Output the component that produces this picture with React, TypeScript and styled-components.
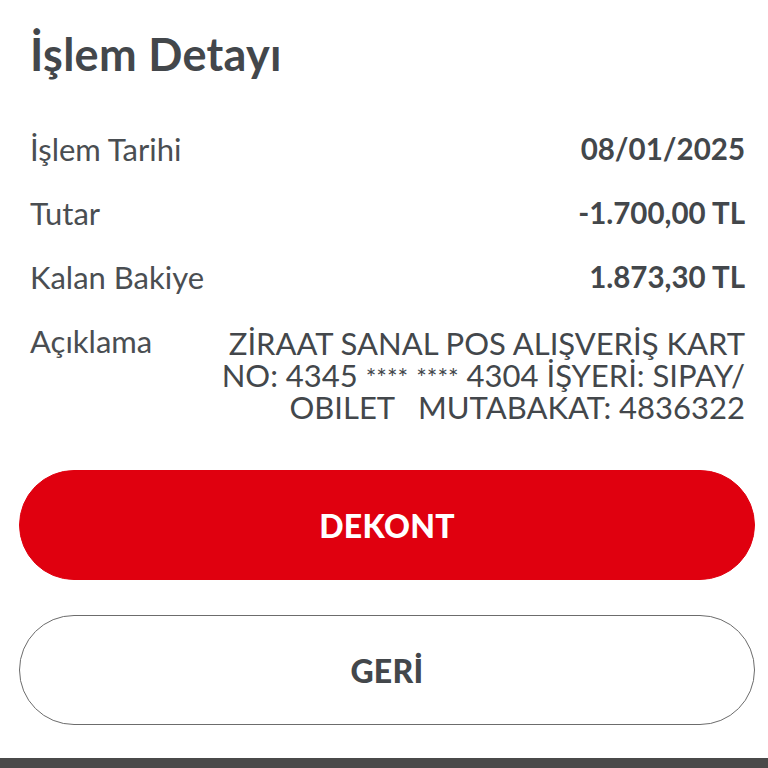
import styled, { createGlobalStyle } from 'styled-components';

const GlobalStyle = createGlobalStyle`
  html, body {
    margin: 0;
    padding: 0;
    background: #ffffff;
  }
  body {
    font-family: Lato, "Noto Sans", sans-serif;
    color: #43474b;
  }
`;

const Page = styled.div`
  width: 768px;
  height: 768px;
  display: flex;
  flex-direction: column;
  overflow: hidden;
`;

const Content = styled.div`
  flex: 1;
  display: flex;
  flex-direction: column;
`;

const Title = styled.h1`
  margin: 27px 0 0 30px;
  font-size: 45px;
  font-weight: 700;
  line-height: 54px;
  color: #43474b;
  letter-spacing: 0.3px;
`;

const Details = styled.dl`
  margin: 50px 23px 0 30px;
  display: flex;
  flex-direction: column;
  gap: 28px;
`;

const Row = styled.div`
  display: flex;
  justify-content: space-between;
  align-items: flex-start;
  gap: 20px;
`;

const Label = styled.dt`
  margin: 0;
  font-size: 31px;
  line-height: 36px;
  color: #4a4e52;
  white-space: nowrap;
`;

const Value = styled.dd<{ $bold?: boolean }>`
  margin: 0;
  padding-top: ${(p) => (p.$bold ? '0' : '4px')};
  text-align: right;
  font-size: ${(p) => (p.$bold ? '29.5px' : '31px')};
  line-height: ${(p) => (p.$bold ? '36px' : '32px')};
  font-weight: ${(p) => (p.$bold ? 700 : 400)};
  color: #43474b;
  white-space: nowrap;
`;

const Stars = styled.span`
  font-size: 25px;
  line-height: 1;
`;

const Actions = styled.div`
  margin: 47px 13px 0 19px;
  display: flex;
  flex-direction: column;
  gap: 35px;
`;

const Button = styled.button<{ $primary?: boolean }>`
  height: 110px;
  border-radius: 55px;
  border: 1px solid ${(p) => (p.$primary ? '#e0000f' : '#6c6c6c')};
  background: ${(p) => (p.$primary ? '#e0000f' : '#ffffff')};
  color: ${(p) => (p.$primary ? '#ffffff' : '#43474b')};
  font-family: Lato, "Noto Sans", sans-serif;
  font-size: 32px;
  font-weight: 900;
  letter-spacing: 0.3px;
  cursor: pointer;
`;

const BottomBar = styled.div`
  height: 10px;
  background: #4a4a4a;
`;

export default function App() {
  return (
    <Page>
      <GlobalStyle />
      <Content>
        <Title>İşlem Detayı</Title>
        <Details>
          <Row>
            <Label>İşlem Tarihi</Label>
            <Value $bold>08/01/2025</Value>
          </Row>
          <Row>
            <Label>Tutar</Label>
            <Value $bold>-1.700,00 TL</Value>
          </Row>
          <Row>
            <Label>Kalan Bakiye</Label>
            <Value $bold>1.873,30 TL</Value>
          </Row>
          <Row>
            <Label>Açıklama</Label>
            <Value>
              ZİRAAT SANAL POS ALIŞVERİŞ KART
              <br />
              NO: 4345 <Stars>****</Stars> <Stars>****</Stars> 4304 İŞYERİ: SIPAY/
              <br />
              OBILET&nbsp;&nbsp; MUTABAKAT: 4836322
            </Value>
          </Row>
        </Details>
        <Actions>
          <Button type="button" $primary>DEKONT</Button>
          <Button type="button">GERİ</Button>
        </Actions>
      </Content>
      <BottomBar />
    </Page>
  );
}
